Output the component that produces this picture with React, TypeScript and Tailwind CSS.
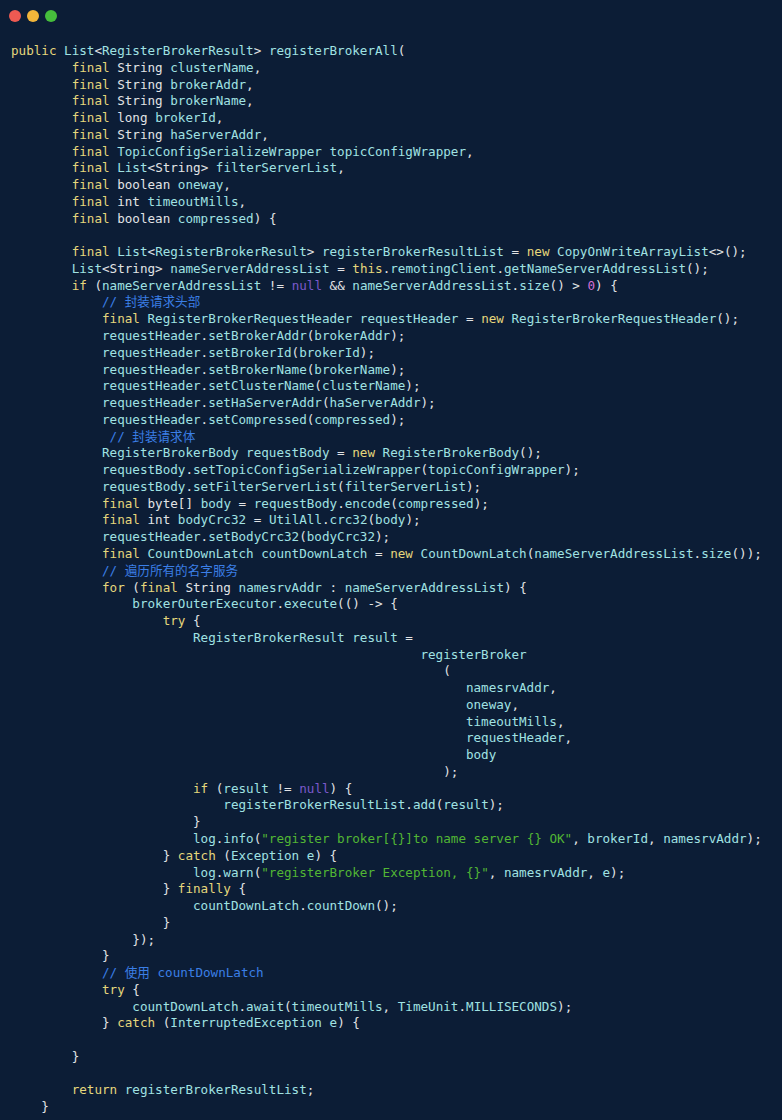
import React from "react";

const sp = (n: number) => " ".repeat(n);

const codeLines: string[] = [
    "public List<RegisterBrokerResult> registerBrokerAll(",
    sp(8) + "final String clusterName,",
    sp(8) + "final String brokerAddr,",
    sp(8) + "final String brokerName,",
    sp(8) + "final long brokerId,",
    sp(8) + "final String haServerAddr,",
    sp(8) + "final TopicConfigSerializeWrapper topicConfigWrapper,",
    sp(8) + "final List<String> filterServerList,",
    sp(8) + "final boolean oneway,",
    sp(8) + "final int timeoutMills,",
    sp(8) + "final boolean compressed) {",
    "",
    sp(8) + "final List<RegisterBrokerResult> registerBrokerResultList = new CopyOnWriteArrayList<>();",
    sp(8) + "List<String> nameServerAddressList = this.remotingClient.getNameServerAddressList();",
    sp(8) + "if (nameServerAddressList != null && nameServerAddressList.size() > 0) {",
    sp(12) + "// 封装请求头部",
    sp(12) + "final RegisterBrokerRequestHeader requestHeader = new RegisterBrokerRequestHeader();",
    sp(12) + "requestHeader.setBrokerAddr(brokerAddr);",
    sp(12) + "requestHeader.setBrokerId(brokerId);",
    sp(12) + "requestHeader.setBrokerName(brokerName);",
    sp(12) + "requestHeader.setClusterName(clusterName);",
    sp(12) + "requestHeader.setHaServerAddr(haServerAddr);",
    sp(12) + "requestHeader.setCompressed(compressed);",
    sp(13) + "// 封装请求体",
    sp(12) + "RegisterBrokerBody requestBody = new RegisterBrokerBody();",
    sp(12) + "requestBody.setTopicConfigSerializeWrapper(topicConfigWrapper);",
    sp(12) + "requestBody.setFilterServerList(filterServerList);",
    sp(12) + "final byte[] body = requestBody.encode(compressed);",
    sp(12) + "final int bodyCrc32 = UtilAll.crc32(body);",
    sp(12) + "requestHeader.setBodyCrc32(bodyCrc32);",
    sp(12) + "final CountDownLatch countDownLatch = new CountDownLatch(nameServerAddressList.size());",
    sp(12) + "// 遍历所有的名字服务",
    sp(12) + "for (final String namesrvAddr : nameServerAddressList) {",
    sp(16) + "brokerOuterExecutor.execute(() -> {",
    sp(20) + "try {",
    sp(24) + "RegisterBrokerResult result =",
    sp(54) + "registerBroker",
    sp(57) + "(",
    sp(60) + "namesrvAddr,",
    sp(60) + "oneway,",
    sp(60) + "timeoutMills,",
    sp(60) + "requestHeader,",
    sp(60) + "body",
    sp(57) + ");",
    sp(24) + "if (result != null) {",
    sp(28) + "registerBrokerResultList.add(result);",
    sp(24) + "}",
    sp(24) + 'log.info("register broker[{}]to name server {} OK", brokerId, namesrvAddr);',
    sp(20) + "} catch (Exception e) {",
    sp(24) + 'log.warn("registerBroker Exception, {}", namesrvAddr, e);',
    sp(20) + "} finally {",
    sp(24) + "countDownLatch.countDown();",
    sp(20) + "}",
    sp(16) + "});",
    sp(12) + "}",
    sp(12) + "// 使用 countDownLatch",
    sp(12) + "try {",
    sp(16) + "countDownLatch.await(timeoutMills, TimeUnit.MILLISECONDS);",
    sp(12) + "} catch (InterruptedException e) {",
    "",
    sp(8) + "}",
    "",
    sp(8) + "return registerBrokerResultList;",
    sp(4) + "}",
];

const keywords = new Set(["public", "final", "new", "this", "if", "for", "try", "catch", "finally", "return"]);
const plainTypes = new Set(["String", "long", "boolean", "int", "byte"]);

// crude java highlighter, good enough for one snippet
const tokenize = (line: string) => {
    const re = /(\/\/.*$)|("[^"]*")|([A-Za-z_][A-Za-z0-9_]*)|(\d+)|(\s+)|(.)/g;
    const out: { text: string; cls: string }[] = [];
    let m: RegExpExecArray | null;
    while ((m = re.exec(line)) !== null) {
        const [text, comment, str, ident, num] = m;
        let cls = "text-[#e2e4e6]";
        if (comment) cls = "text-[#3b7fe6]";
        else if (str) cls = "text-[#52b634]";
        else if (num) cls = "text-[#d46fd6]";
        else if (ident) {
            if (keywords.has(ident)) cls = "text-[#e6d77c]";
            else if (ident === "null") cls = "text-[#7b59cc]";
            else if (plainTypes.has(ident)) cls = "text-[#e2e4e6]";
            else cls = "text-[#a0e2e3]";
        }
        out.push({ text, cls });
    }
    return out;
};

const WindowDots: React.FC = () => (
    <div className="flex gap-[6px] pl-[9px] pt-[10px]">
        <span className="w-[12px] h-[12px] rounded-full bg-[#ee5a52]"></span>
        <span className="w-[12px] h-[12px] rounded-full bg-[#f2b53a]"></span>
        <span className="w-[12px] h-[12px] rounded-full bg-[#46bd3c]"></span>
    </div>
);

export default function App() {
    return (
        <div className="w-[782px] min-h-[1120px] bg-[#0c1d36] overflow-hidden">
            <WindowDots />
            <pre
                className="mt-[21px] pl-[11px] text-[12.6px] leading-[16.76px] whitespace-pre"
                style={{ fontFamily: '"DejaVu Sans Mono", "Noto Sans CJK SC", monospace' }}
            >
                {codeLines.map((line, i) => (
                    <div key={i} className="h-[16.77px]">
                        {tokenize(line).map((t, j) => (
                            <span key={j} className={t.cls}>{t.text}</span>
                        ))}
                    </div>
                ))}
            </pre>
        </div>
    );
}
